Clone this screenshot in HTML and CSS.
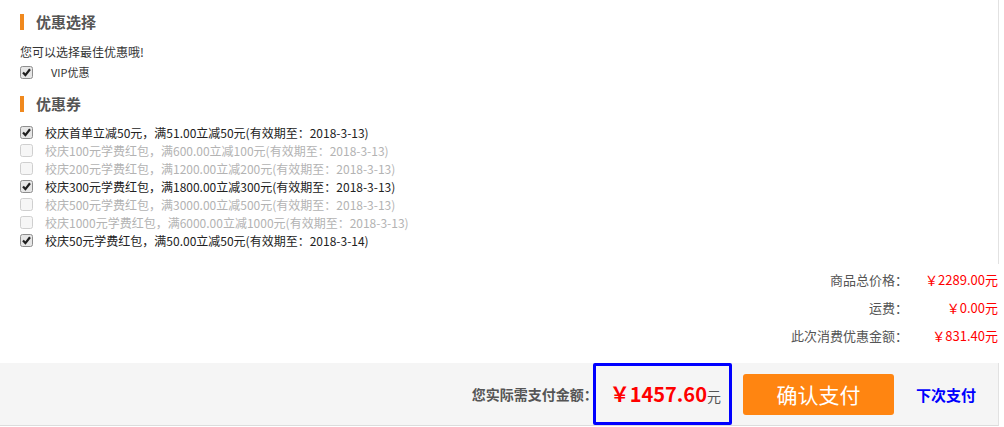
FILE: index.html
```html
<!DOCTYPE html>
<html>
<head>
  <meta charset="utf-8">
  <title>优惠选择</title>
  <link rel="stylesheet" href="styles.css">
</head>
<body>
  <div class="page">
    <section class="choose">
      <h3 class="title">优惠选择</h3>
      <p class="tip">您可以选择最佳优惠哦!</p>
      <div class="vip">
        <svg class="box" width="13" height="13" viewBox="0 0 13 13"><rect x=".5" y=".5" width="12" height="12" rx="2" class="frame"/><path d="M3 6.5l2.4 2.6L10 3.2" class="tick"/></svg>
        <span>VIP优惠</span>
      </div>
      <h3 class="title">优惠券</h3>
      <ul class="coupons">
        <li class="on"><svg class="box" width="13" height="13" viewBox="0 0 13 13"><rect x=".5" y=".5" width="12" height="12" rx="2" class="frame"/><path d="M3 6.5l2.4 2.6L10 3.2" class="tick"/></svg>校庆首单立减50元，满51.00立减50元(有效期至：2018-3-13)</li>
        <li class="off"><svg class="box" width="13" height="13" viewBox="0 0 13 13"><rect x=".5" y=".5" width="12" height="12" rx="2" class="frame"/></svg>校庆100元学费红包，满600.00立减100元(有效期至：2018-3-13)</li>
        <li class="off"><svg class="box" width="13" height="13" viewBox="0 0 13 13"><rect x=".5" y=".5" width="12" height="12" rx="2" class="frame"/></svg>校庆200元学费红包，满1200.00立减200元(有效期至：2018-3-13)</li>
        <li class="on"><svg class="box" width="13" height="13" viewBox="0 0 13 13"><rect x=".5" y=".5" width="12" height="12" rx="2" class="frame"/><path d="M3 6.5l2.4 2.6L10 3.2" class="tick"/></svg>校庆300元学费红包，满1800.00立减300元(有效期至：2018-3-13)</li>
        <li class="off"><svg class="box" width="13" height="13" viewBox="0 0 13 13"><rect x=".5" y=".5" width="12" height="12" rx="2" class="frame"/></svg>校庆500元学费红包，满3000.00立减500元(有效期至：2018-3-13)</li>
        <li class="off"><svg class="box" width="13" height="13" viewBox="0 0 13 13"><rect x=".5" y=".5" width="12" height="12" rx="2" class="frame"/></svg>校庆1000元学费红包，满6000.00立减1000元(有效期至：2018-3-13)</li>
        <li class="on"><svg class="box" width="13" height="13" viewBox="0 0 13 13"><rect x=".5" y=".5" width="12" height="12" rx="2" class="frame"/><path d="M3 6.5l2.4 2.6L10 3.2" class="tick"/></svg>校庆50元学费红包，满50.00立减50元(有效期至：2018-3-14)</li>
      </ul>
    </section>

    <div class="summary">
      <div class="row"><span class="label">商品总价格：</span><span class="value">￥2289.00元</span></div>
      <div class="row"><span class="label">运费：</span><span class="value">￥0.00元</span></div>
      <div class="row"><span class="label">此次消费优惠金额：</span><span class="value">￥831.40元</span></div>
    </div>

    <div class="paybar">
      <span class="pay-label">您实际需支付金额：</span>
      <span class="amount"><b>￥1457.60</b>元</span>
      <button class="confirm">确认支付</button>
      <a class="later" href="#">下次支付</a>
    </div>
  </div>
</body>
</html>
```

FILE: styles.css
```css
body {
  margin: 0;
  font-family: "Noto Sans CJK SC", sans-serif;
  font-size: 12px;
  color: #333;
  background: #fff;
}
.page {
  width: 999px;
}
.choose {
  box-sizing: border-box;
  height: 264px;
  padding: 14px 0 0 20px;
  border-right: 1px solid #e2e2e2;
}
.title {
  margin: 0;
  padding-left: 12px;
  border-left: 4px solid #f0891e;
  font-size: 15px;
  line-height: 16px;
  font-weight: bold;
  color: #555;
}
.tip {
  margin: 14px 0 0;
  line-height: 16px;
  color: #333;
}
.vip {
  display: flex;
  align-items: center;
  gap: 18px;
  margin: 4px 0 16px;
  height: 16px;
  font-size: 11px;
}
.box {
  flex: none;
}
.frame {
  fill: #e6e6e6;
  stroke: #8e8e8e;
}
.tick {
  fill: none;
  stroke: #1e1e1e;
  stroke-width: 2.2;
}
.coupons {
  list-style: none;
  margin: 11px 0 0;
  padding: 0;
}
.coupons li {
  display: flex;
  align-items: center;
  gap: 12px;
  height: 18px;
  font-size: 12px;
}
.coupons li.on {
  color: #222;
}
.coupons li.off {
  color: #b3b3b3;
}
.coupons li.off .frame {
  fill: #f6f6f6;
  stroke: #cfcfcf;
}
.summary {
  padding: 2px 1px 0 0;
  font-size: 13px;
}
.summary .row {
  display: flex;
  justify-content: flex-end;
  height: 28px;
  line-height: 28px;
}
.summary .label {
  color: #555;
}
.summary .value {
  width: 90px;
  text-align: right;
  color: #f00;
}
.paybar {
  display: flex;
  align-items: center;
  justify-content: flex-end;
  margin-top: 13px;
  height: 62px;
  padding-right: 22px;
  background: #f5f5f5;
  border-bottom: 1px solid #dcdcdc;
  border-right: 1px solid #e2e2e2;
}
.pay-label {
  font-size: 14px;
  font-weight: bold;
  color: #555;
}
.amount {
  position: relative;
  display: flex;
  align-items: baseline;
  height: 62px;
  line-height: 62px;
  padding: 0 11px 0 12px;
  font-size: 14px;
  color: #555;
}
.amount b {
  font-size: 20px;
  color: #f00;
}
.amount::after {
  content: "";
  position: absolute;
  top: 0;
  bottom: 0;
  left: -5px;
  right: 0;
  border: 3px solid #0000ff;
  border-radius: 2px;
}
.confirm {
  width: 151px;
  height: 41px;
  margin-left: 11px;
  border: 0;
  border-radius: 3px;
  background: #ff8511;
  color: #fff;
  font-family: "Noto Sans CJK SC", sans-serif;
  font-size: 21px;
  cursor: pointer;
}
.later {
  margin-left: 22px;
  font-size: 15px;
  font-weight: bold;
  color: #0000ff;
  text-decoration: none;
}
```
